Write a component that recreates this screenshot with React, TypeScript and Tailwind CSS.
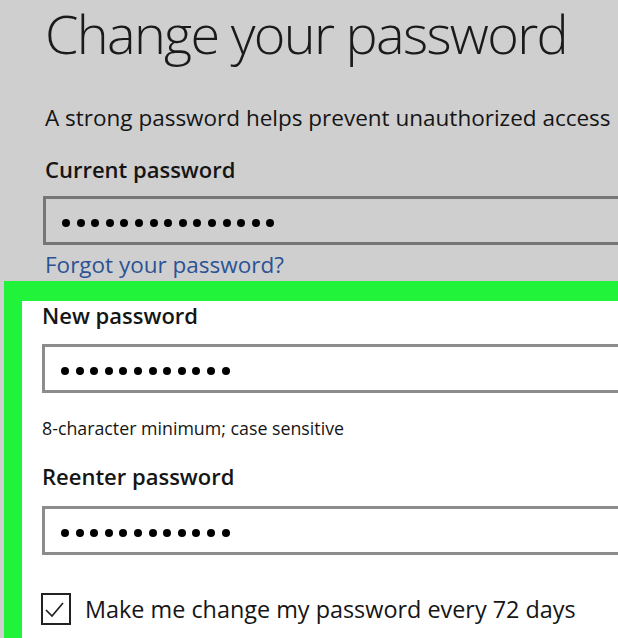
import type { JSX } from 'react'

const FONT = "font-['Open_Sans','Liberation_Sans',sans-serif]"

/** A row of filled dots, standing in for a masked password value. */
function Dots({ count }: { count: number }): JSX.Element {
  return (
    <div className="flex gap-[6.6px]">
      {Array.from({ length: count }, (_, i) => (
        <span key={i} className="block h-[8px] w-[8px] rounded-full bg-black" />
      ))}
    </div>
  )
}

interface PasswordBoxProps {
  count: number
  onWhite?: boolean
}

function PasswordBox({ count, onWhite = false }: PasswordBoxProps): JSX.Element {
  return (
    <div
      className={
        onWhite
          ? 'flex h-[49px] w-[620px] items-center border-[3px] border-[#8c8c8c] bg-white pl-[16px] pt-[4px]'
          : 'flex h-[49px] w-[620px] items-center border-[3px] border-[#767676] bg-[#cfcfcf] pl-[16px] pt-[4px]'
      }
    >
      <Dots count={count} />
    </div>
  )
}

export default function App(): JSX.Element {
  return (
    <div className={`h-[638px] w-[618px] overflow-hidden bg-[#cfcfcf] text-[#151515] ${FONT}`}>
      <div className="pl-[45px]">
        <h1 className="whitespace-nowrap pt-[1px] text-[54px] font-light leading-[64px] tracking-[-1.7px] text-[#1a1a1a]">
          Change your password
        </h1>
        <p className="mt-[42px] whitespace-nowrap text-[22.5px] leading-[22px]">
          A strong password helps prevent unauthorized access
        </p>
        <p className="mt-[29px] text-[22px] font-semibold leading-[22px]">Current password</p>
        <div className="mt-[16px] -ml-[2px]">
          <PasswordBox count={15} />
        </div>
        <a href="#" className="mt-[9px] block text-[22.5px] leading-[21px] text-[#2b5394]">
          Forgot your password?
        </a>
      </div>

      <section className="ml-[4px] mt-[6px] h-[400px] border-l-[18px] border-t-[20px] border-[#21f23a] bg-white pl-[19px]">
        <p className="pt-[3px] pl-[1px] text-[22px] font-semibold leading-[22px]">New password</p>
        <div className="mt-[18px] pl-[1px]">
          <PasswordBox count={12} onWhite />
        </div>
        <p className="mt-[27px] pl-[1px] text-[17.8px] leading-[16px]">8-character minimum; case sensitive</p>
        <p className="mt-[29px] pl-[1px] text-[22px] font-semibold leading-[22px]">Reenter password</p>
        <div className="mt-[19px] pl-[1px]">
          <PasswordBox count={12} onWhite />
        </div>
        <label className="mt-[38px] flex items-center gap-[14px]">
          <span className="block h-[32px] w-[30px] border-2 border-[#222]">
            <svg viewBox="0 0 26 28" className="block h-full w-full" fill="none" stroke="#222" strokeWidth="1.7">
              <polyline points="3,15 9,21 20,8" />
            </svg>
          </span>
          <span className="whitespace-nowrap text-[23.4px] leading-[23px]">
            Make me change my password every 72 days
          </span>
        </label>
      </section>
    </div>
  )
}
